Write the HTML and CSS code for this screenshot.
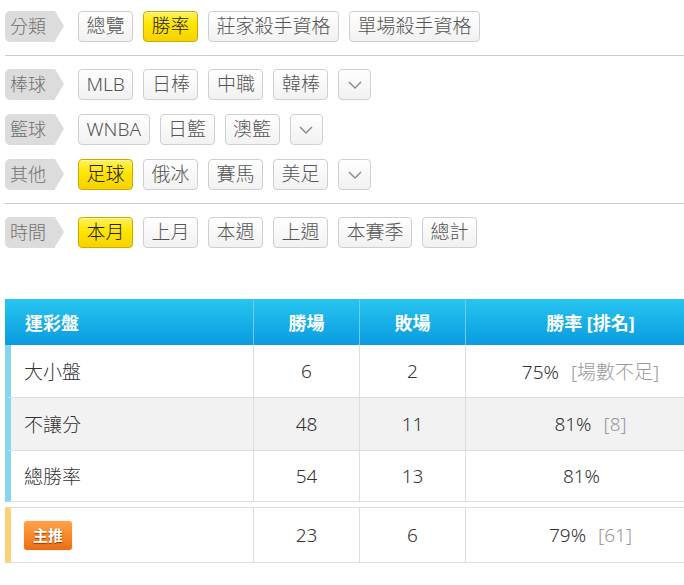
FILE: index.html
```html
<!DOCTYPE html>
<html lang="zh-Hant">
<head>
    <meta charset="UTF-8">
    <meta name="viewport" content="width=device-width, initial-scale=1.0">
    <title>勝率</title>
    <link rel="stylesheet" href="styles.css">
</head>
<body>
    <div class="filters">
        <div class="filter-row">
            <div class="tag">分類</div>
            <div class="btn">總覽</div>
            <div class="btn active">勝率</div>
            <div class="btn">莊家殺手資格</div>
            <div class="btn">單場殺手資格</div>
        </div>

        <hr class="divider">

        <div class="filter-row">
            <div class="tag">棒球</div>
            <div class="btn">MLB</div>
            <div class="btn">日棒</div>
            <div class="btn">中職</div>
            <div class="btn">韓棒</div>
            <div class="btn more"><svg width="14" height="8" viewBox="0 0 14 8"><path d="M1 1l6 6 6-6" fill="none" stroke="#888" stroke-width="1.4"/></svg></div>
        </div>
        <div class="filter-row">
            <div class="tag">籃球</div>
            <div class="btn">WNBA</div>
            <div class="btn">日籃</div>
            <div class="btn">澳籃</div>
            <div class="btn more"><svg width="14" height="8" viewBox="0 0 14 8"><path d="M1 1l6 6 6-6" fill="none" stroke="#888" stroke-width="1.4"/></svg></div>
        </div>
        <div class="filter-row">
            <div class="tag">其他</div>
            <div class="btn active">足球</div>
            <div class="btn">俄冰</div>
            <div class="btn">賽馬</div>
            <div class="btn">美足</div>
            <div class="btn more"><svg width="14" height="8" viewBox="0 0 14 8"><path d="M1 1l6 6 6-6" fill="none" stroke="#888" stroke-width="1.4"/></svg></div>
        </div>

        <hr class="divider">

        <div class="filter-row">
            <div class="tag">時間</div>
            <div class="btn active">本月</div>
            <div class="btn">上月</div>
            <div class="btn">本週</div>
            <div class="btn">上週</div>
            <div class="btn">本賽季</div>
            <div class="btn">總計</div>
        </div>
    </div>

    <table class="stats">
        <colgroup>
            <col class="c-name"><col class="c-num"><col class="c-num"><col class="c-rate">
        </colgroup>
        <thead>
            <tr>
                <th class="name">運彩盤</th>
                <th>勝場</th>
                <th>敗場</th>
                <th>勝率 [排名]</th>
            </tr>
        </thead>
        <tbody>
            <tr>
                <td class="name">大小盤</td>
                <td>6</td>
                <td>2</td>
                <td>75%<span class="rank">[場數不足]</span></td>
            </tr>
            <tr class="alt">
                <td class="name">不讓分</td>
                <td>48</td>
                <td>11</td>
                <td>81%<span class="rank">[8]</span></td>
            </tr>
            <tr>
                <td class="name">總勝率</td>
                <td>54</td>
                <td>13</td>
                <td>81%<span class="rank empty"></span></td>
            </tr>
        </tbody>
    </table>

    <table class="stats main-pick">
        <colgroup>
            <col class="c-name"><col class="c-num"><col class="c-num"><col class="c-rate">
        </colgroup>
        <tbody>
            <tr>
                <td class="name"><span class="badge">主推</span></td>
                <td>23</td>
                <td>6</td>
                <td>79%<span class="rank">[61]</span></td>
            </tr>
        </tbody>
    </table>
</body>
</html>
```

FILE: styles.css
```css
:root {
    --text: #333333;
    --muted: #999999;
    --line: #dddddd;
    --tag-bg: #dcdcdc;
    --sky: #86d6f2;
    --amber: #fdd07c;
}

* {
    box-sizing: border-box;
    margin: 0;
    padding: 0;
}

body {
    font-family: "Noto Sans", "Noto Sans CJK TC", sans-serif;
    font-weight: 300;
    color: var(--text);
    background-color: #ffffff;
    width: 684px;
    overflow: hidden;
}

.filters {
    padding: 11px 0 0 5px;
    margin-bottom: 51px;
}

.filter-row {
    display: flex;
    align-items: center;
    gap: 10px;
    height: 31px;
    margin-bottom: 14px;
}

.divider {
    border: none;
    border-top: 1px solid #cccccc;
    margin: 0 0 13px;
}

.filter-row + .divider {
    margin-top: -1px;
}

.tag {
    position: relative;
    height: 31px;
    line-height: 31px;
    font-size: 18px;
    color: #707070;
    background-color: var(--tag-bg);
    border-radius: 5px 0 0 5px;
    padding: 0 9px 0 5px;
    margin-right: 13px;
}

.tag::after {
    content: "";
    position: absolute;
    top: 0;
    right: -9px;
    border-left: 9px solid var(--tag-bg);
    border-top: 15.5px solid transparent;
    border-bottom: 15.5px solid transparent;
}

.btn {
    height: 31px;
    line-height: 29px;
    font-size: 19px;
    color: #555555;
    padding: 0 7.5px;
    border: 1px solid #cfcfcf;
    border-radius: 4px;
    background: linear-gradient(#ffffff, #f1f1f1);
    white-space: nowrap;
}

.btn.active {
    color: #222222;
    border-color: #d2a800;
    background: linear-gradient(#fff25a 0%, #ffe400 45%, #f6d200 100%);
    box-shadow: inset 0 1px 0 rgba(255, 255, 255, 0.5);
}

.btn.more {
    width: 33px;
    padding: 0;
    display: flex;
    align-items: center;
    justify-content: center;
}

/* Stats table */
.stats {
    border-collapse: separate;
    border-spacing: 0;
    width: 711px;
    margin-left: 5px;
    table-layout: fixed;
    font-size: 19px;
}

.c-name { width: 249px; }
.c-num { width: 106px; }
.c-rate { width: 250px; }

.stats thead th {
    height: 46px;
    color: #ffffff;
    font-weight: 700;
    font-size: 18px;
    text-align: center;
    background: linear-gradient(#27c5ef, #0a9be0);
    border-right: 1px solid #6ccdf1;
}

.stats thead th.name {
    text-align: left;
    padding-left: 20px;
}

.stats td {
    height: 53px;
    text-align: center;
    border-right: 1px solid var(--line);
    border-bottom: 1px solid var(--line);
    background-color: #ffffff;
}

.stats tr.alt td {
    background-color: #f2f2f2;
}

.stats td.name {
    text-align: left;
    padding-left: 13px;
    border-left: 6px solid var(--sky);
}

.stats tbody tr:last-child td {
    height: 51px;
}

.rank {
    color: var(--muted);
    margin-left: 12px;
}

.rank.empty {
    display: inline-block;
    width: 6px;
}

.main-pick {
    margin-top: 5px;
}

.main-pick td {
    border-top: 1px solid var(--line);
}

.main-pick tbody tr:last-child td {
    height: 56px;
}

.main-pick td.name {
    border-left-color: var(--amber);
}

.badge {
    display: inline-block;
    width: 48px;
    height: 29px;
    line-height: 29px;
    text-align: center;
    font-size: 15px;
    font-weight: 700;
    color: #ffffff;
    text-shadow: 0 1px 1px #8a3a00;
    border-radius: 3px;
    background: linear-gradient(#ffa149, #f58a30 50%, #ec6c14);
    box-shadow: 0 0 1px rgba(200, 90, 0, 0.6);
}
```
